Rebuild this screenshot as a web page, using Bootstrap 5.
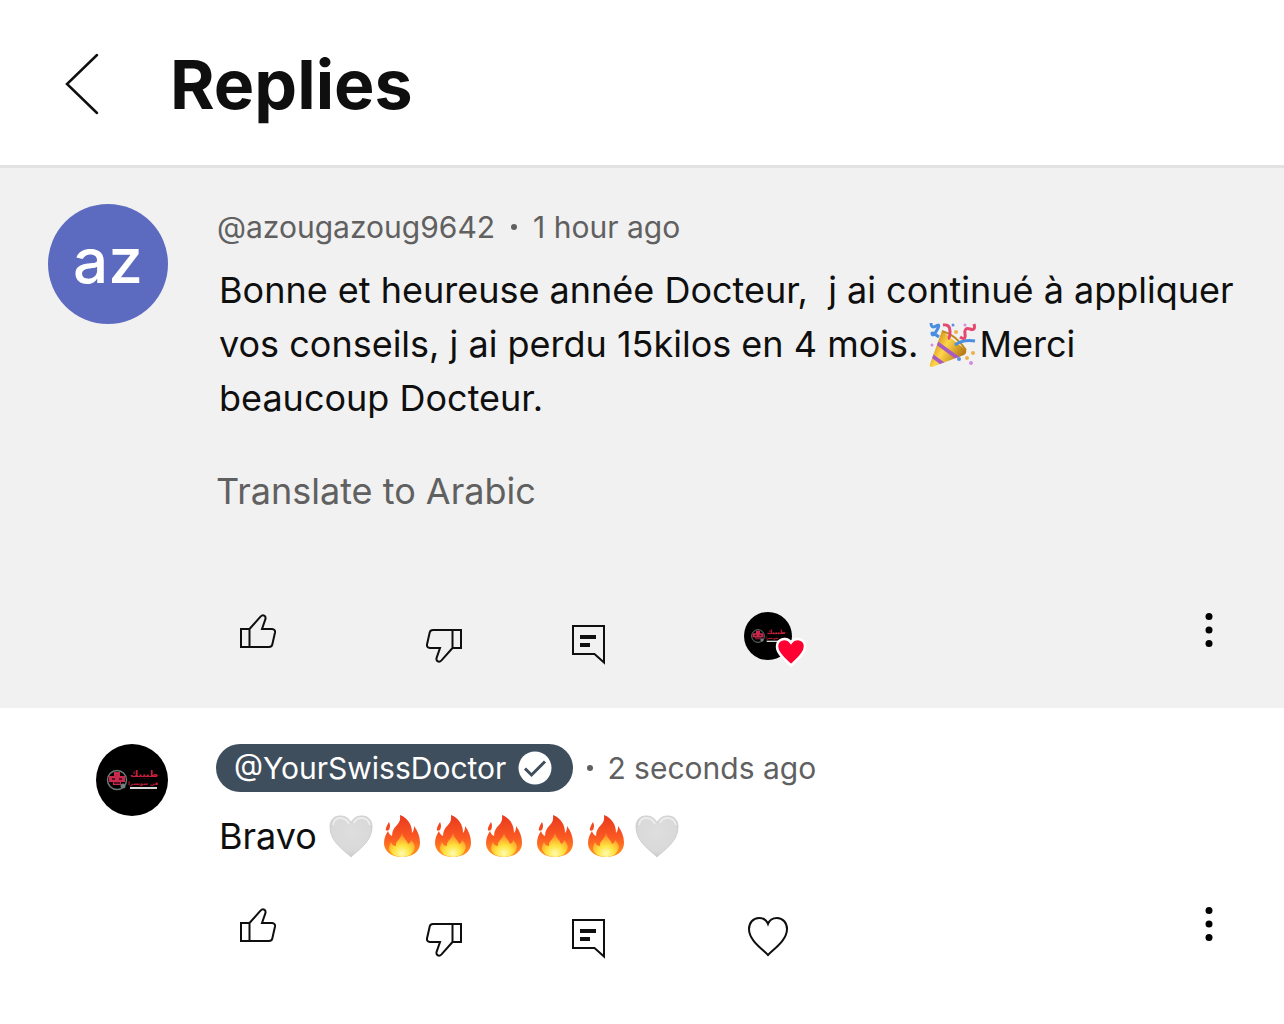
<!DOCTYPE html>
<html lang="en">
<head>
<meta charset="utf-8">
<meta name="viewport" content="width=device-width, initial-scale=1">
<title>Replies</title>
<link href="https://cdn.jsdelivr.net/npm/bootstrap@5.3.0/dist/css/bootstrap.min.css" rel="stylesheet">
<style>
body { font-family: Inter, "Liberation Sans", sans-serif; color: #0f0f0f; background: #fff; }
svg { display: block; flex-shrink: 0; }
.topbar { padding: 40px 64px 37px; gap: 70px; border-bottom: 3px solid #e2e2e2; }
.topbar h1 { font-size: 68px; line-height: 88px; font-weight: 700; }
.thread { padding: 36px 36px 44px 48px; }
.thread-main { background: #f1f1f1; }
.face-col { width: 168px; flex-shrink: 0; }
.face-lg { width: 120px; height: 120px; background: #5c6bc0; font-size: 62px; line-height: 114px; font-weight: 500; }
.thread-reply .face-col { padding-left: 48px; }
.meta { font-size: 30px; line-height: 46px; color: #606060; gap: 16px; padding-left: 1px; }
.thread-reply .meta { line-height: 48px; gap: 14px; padding-left: 0; }
.dot-sep { width: 6px; height: 6px; background: #606060; }
.said { font-size: 36px; line-height: 54px; padding-left: 3px; margin: 13px 0 0; white-space: pre-wrap; }
.thread-reply .said { margin-top: 17px; }
.said svg { display: inline-block; vertical-align: -10px; }
.translate { font-size: 36px; line-height: 54px; color: #606060; margin: 39px 0 94px; }
.owner { background: #3f4e5c; color: #fff; padding: 0 21px 0 18px; gap: 12px; }
.actions { padding: 0 35px 0 24px; height: 52px; }
.thread-reply .actions { margin-top: 43px; }
.actions button { color: #0f0f0f; text-align: left; }
.act-up { width: 186px; padding-top: 2px; }
.act-down { width: 146px; padding-top: 15px; }
.act-note { width: 172px; padding-top: 12px; }
.act-heart { padding-top: 10px; }
.act-dots { margin-left: auto; }
.liked { left: 30px; top: 24px; }
.stroke { fill: none; stroke: currentColor; stroke-width: 2; }
</style>
<script src="https://cdn.jsdelivr.net/npm/bootstrap@5.3.0/dist/js/bootstrap.bundle.min.js"></script>
</head>
<body>
<svg width="0" height="0" class="position-absolute" aria-hidden="true">
  <defs>
    <linearGradient id="gFlame" x1="0" y1="0" x2="0" y2="1"><stop offset="0" stop-color="#e8381f"/><stop offset=".55" stop-color="#fb5a22"/><stop offset="1" stop-color="#ff9a1e"/></linearGradient>
    <radialGradient id="gCore" cx=".5" cy=".85" r=".75"><stop offset="0" stop-color="#fffbb0"/><stop offset=".45" stop-color="#ffe23c"/><stop offset="1" stop-color="#ff8a28"/></radialGradient>
    <radialGradient id="gHeart" cx=".5" cy=".4" r=".6"><stop offset="0" stop-color="#dedede"/><stop offset=".75" stop-color="#d9d9d9"/><stop offset="1" stop-color="#cbcbcb"/></radialGradient>
    <linearGradient id="gCone" x1="0" y1=".6" x2=".7" y2="1"><stop offset="0" stop-color="#d99a1c"/><stop offset=".35" stop-color="#ffd64a"/><stop offset="1" stop-color="#b97c14"/></linearGradient>
    <clipPath id="coneClip"><path d="M14 10 38 29Q39 32 36 34L4 46Q1 46 2 43Z"/></clipPath>
    <symbol id="up" viewBox="0 0 36 36"><path class="stroke" d="M1 15H9.500V33H1ZM9.500 15 20.500 2.600Q22.500 .5 24.500 1.800 26 3 25.400 5.200L22 15H32Q35.500 15.500 35 18.500L32.300 30.500Q31.700 33 29 33H9.500"/></symbol>
    <symbol id="down" viewBox="0 0 36 36"><use href="#up" width="36" height="36" transform="rotate(180 18 18)"/></symbol>
    <symbol id="note" viewBox="0 0 34 42"><path class="stroke" d="M1 2H32V38.500L22.500 30H1Z"/><path d="M8 11H24V15H8ZM8 19H18V23H8Z" fill="currentColor"/></symbol>
    <symbol id="dots" viewBox="0 0 8 36"><circle cx="4" cy="4.500" r="3.500"/><circle cx="4" cy="18" r="3.500"/><circle cx="4" cy="31.500" r="3.500"/></symbol>
    <symbol id="fire" viewBox="0 0 51 46">
      <path fill="url(#gFlame)" d="M22 2C30 5 34 12 34 20 36 18 36 15 36 13 40 18 42 24 42 30 42 39 34 44 24 44 13 44 6 38 6 30 6 25 8 21 10 18 11 21 12 22 14 23 14 18 16 15 19 12 22 9 22.500 6 22 2ZM11 9Q13 13 11 17 7 19 8 15 9 12 11 9Z"/>
      <path fill="url(#gCore)" d="M24 20C25 25 29 27 30 31 32 30 33 29 33 27 36 30 38 33 36 37 34 42 29 44 24 44 18 44 12 41 11 36 11 33 12 31 13 29 14 32 16 33 18 33 17 28 23 26 24 20Z"/>
    </symbol>
    <symbol id="wheart" viewBox="0 0 51 46"><path fill="url(#gHeart)" stroke="#d0d0d0" d="M24 44C17 37 3 29 3 14 3 7 7 3 13 3 18 3 22 5 24 10 26 5 30 3 35 3 41 3 45 7 45 14 45 29 31 37 24 44Z"/><path d="M6 12Q7 5 13 5T22 11M27 10Q29 5 35 5T43 12" fill="none" stroke="#ececec" stroke-width="2"/></symbol>
    <symbol id="brand" viewBox="0 0 72 72">
      <circle cx="36" cy="36" r="36" fill="#000"/>
      <circle cx="21" cy="36" r="9.500" fill="none" stroke="#6d7775" stroke-width="1.500"/>
      <path d="M18 28H24V32H29V38H25V41H17V38H13V32H18Z" fill="#c9284c"/>
      <path d="M16 35H19M23 35H26M18 39H24" stroke="#2b0912" stroke-width="1.500"/><circle cx="27" cy="42" r="2.500" fill="#718084"/>
      <text x="62" y="33" text-anchor="end" font-family="DejaVu Sans, sans-serif" font-weight="700" font-size="9" fill="#d0203f">طبيبك</text>
      <text x="62" y="41" text-anchor="end" font-family="DejaVu Sans, sans-serif" font-weight="700" font-size="5" fill="#c5203f">في سويسرا</text>
      <path d="M34 44H61" stroke="#d9d9d9" stroke-width="2"/>
    </symbol>
  </defs>
</svg>

<header class="topbar d-flex align-items-center">
  <button class="btn p-0 border-0" aria-label="Back"><svg width="36" height="62" viewBox="0 0 36 62" fill="none" stroke="#0f0f0f" stroke-width="2.500" stroke-linecap="round"><path d="M33 2 3 31 33 60"/></svg></button>
  <h1 class="m-0">Replies</h1>
</header>

<main>
  <article class="thread thread-main d-flex">
    <div class="face-col"><div class="face-lg rounded-circle text-white text-center">az</div></div>
    <div class="flex-grow-1">
      <div class="meta d-flex align-items-center"><span>@azougazoug9642</span><span class="dot-sep rounded-circle"></span><span>1 hour ago</span></div>
      <p class="said">Bonne et heureuse année Docteur,  j ai continué à appliquer vos conseils, j ai perdu 15kilos en 4 mois. <svg width="51" height="46" viewBox="0 0 51 46" role="img" aria-label="Party popper"><path d="M14 10 38 29Q39 32 36 34L4 46Q1 46 2 43Z" fill="url(#gCone)"/><path d="M9 22 31 38M3 34 18 45" clip-path="url(#coneClip)" stroke="#a95bc4" stroke-width="4"/><path d="M14 10Q28 14 38 29" stroke="#c08a1c" stroke-width="2" fill="none"/><path d="M3 2Q3 8 8 5T9 9 4 13 11 16M27 24Q35 18 47 20" stroke="#4a8ee0" stroke-width="3" fill="none"/><path d="M15 4Q22 3 22 10T20 18M46 3Q48 10 42 8T37 13 32 16" stroke="#e5476e" stroke-width="3" fill="none"/><g fill="#5b90e5"><circle cx="25" cy="4" r="1.500"/><circle cx="31" cy="38" r="2"/></g><g fill="#edb04d"><circle cx="39" cy="37" r="2"/><circle cx="45" cy="32" r="2"/><circle cx="28" cy="11" r="2"/></g><g fill="#d48be0"><circle cx="43" cy="42" r="2"/><circle cx="4" cy="24" r="1.500"/><circle cx="37" cy="4" r="1.500"/></g></svg>Merci beaucoup Docteur.</p>
      <a href="#" class="translate d-block text-decoration-none">Translate to Arabic</a>
      <div class="actions d-flex align-items-start">
        <button class="btn px-0 pb-0 border-0 act-up" aria-label="Like"><svg width="36" height="36"><use href="#up"/></svg></button>
        <button class="btn px-0 pb-0 border-0 act-down" aria-label="Dislike"><svg width="36" height="36"><use href="#down"/></svg></button>
        <button class="btn px-0 pb-0 border-0 act-note" aria-label="Reply"><svg width="34" height="42"><use href="#note"/></svg></button>
        <button class="btn p-0 border-0 position-relative" aria-label="Loved by the creator"><svg width="48" height="48"><use href="#brand"/></svg><svg class="liked position-absolute" width="34" height="32" viewBox="0 0 34 32"><path d="M17 29.500C12 24.500 3 18 3 10.500 3 2.500 13 .5 17 6.500 21 .5 31 2.500 31 10.500 31 18 22 24.500 17 29.500Z" fill="#ff0033" stroke="#fff" stroke-width="2.500"/></svg></button>
        <button class="btn p-0 border-0 act-dots" aria-label="More options"><svg width="8" height="36"><use href="#dots"/></svg></button>
      </div>
    </div>
  </article>

  <article class="thread thread-reply d-flex">
    <div class="face-col"><svg width="72" height="72" role="img" aria-label="YourSwissDoctor"><use href="#brand"/></svg></div>
    <div class="flex-grow-1">
      <div class="meta d-flex align-items-center">
        <span class="owner d-flex align-items-center rounded-pill"><span>@YourSwissDoctor</span><svg width="34" height="34" viewBox="0 0 34 34" role="img" aria-label="Verified"><circle cx="17" cy="17" r="16.500" fill="#fff"/><path d="M7 17.500 13.500 24 27 10.500" fill="none" stroke="#3f4e5c" stroke-width="3"/></svg></span>
        <span class="dot-sep rounded-circle"></span><span>2 seconds ago</span>
      </div>
      <p class="said">Bravo <svg width="51" height="46" role="img" aria-label="White heart"><use href="#wheart"/></svg><svg width="51" height="46" role="img" aria-label="Fire"><use href="#fire"/></svg><svg width="51" height="46" role="img" aria-label="Fire"><use href="#fire"/></svg><svg width="51" height="46" role="img" aria-label="Fire"><use href="#fire"/></svg><svg width="51" height="46" role="img" aria-label="Fire"><use href="#fire"/></svg><svg width="51" height="46" role="img" aria-label="Fire"><use href="#fire"/></svg><svg width="51" height="46" role="img" aria-label="White heart"><use href="#wheart"/></svg></p>
      <div class="actions d-flex align-items-start">
        <button class="btn px-0 pb-0 border-0 act-up" aria-label="Like"><svg width="36" height="36"><use href="#up"/></svg></button>
        <button class="btn px-0 pb-0 border-0 act-down" aria-label="Dislike"><svg width="36" height="36"><use href="#down"/></svg></button>
        <button class="btn px-0 pb-0 border-0 act-note" aria-label="Reply"><svg width="34" height="42"><use href="#note"/></svg></button>
        <button class="btn px-0 pb-0 border-0 act-heart" aria-label="Love"><svg width="48" height="42" viewBox="0 0 48 42"><path class="stroke" d="M24 39C17 32 5 24 5 13 5 7 9 2 15 2 19 2 22.500 4 24 8 25.500 4 29 2 33 2 39 2 43 7 43 13 43 24 31 32 24 39Z"/></svg></button>
        <button class="btn p-0 border-0 act-dots" aria-label="More options"><svg width="8" height="36"><use href="#dots"/></svg></button>
      </div>
    </div>
  </article>
</main>
</body>
</html>
